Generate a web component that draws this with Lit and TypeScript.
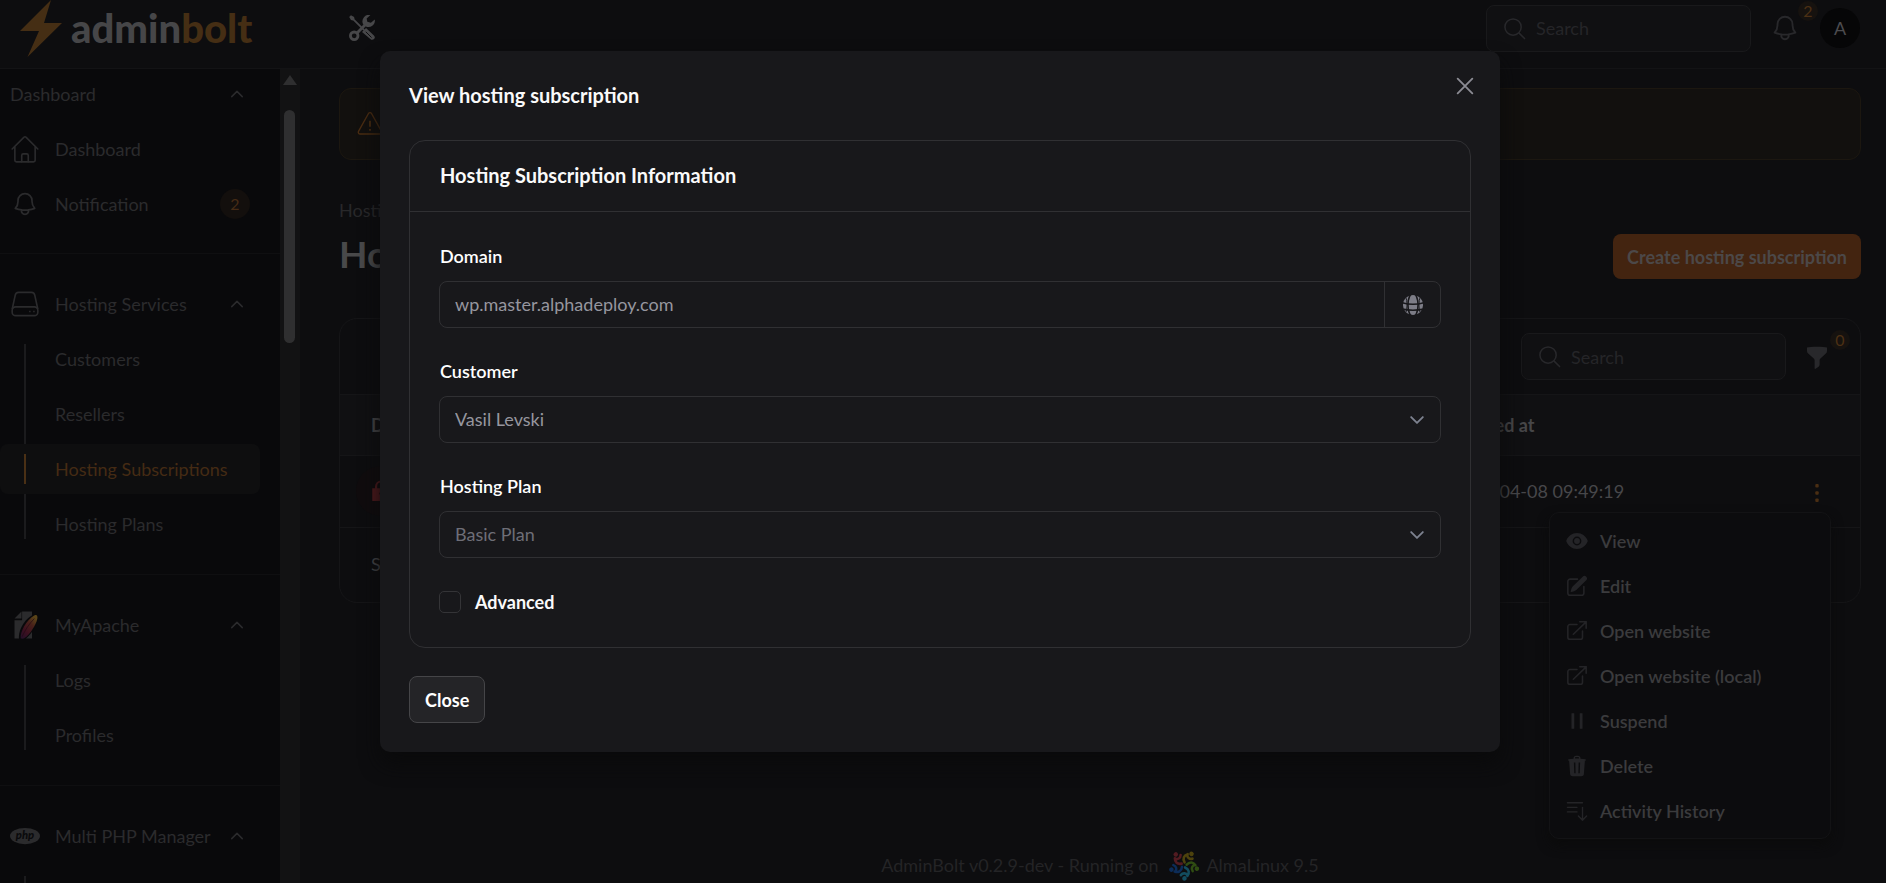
import { LitElement, html, css, svg, nothing } from "lit";
import { customElement, property } from "lit/decorators.js";
import { classMap } from "lit/directives/class-map.js";

const icons = {
  home: svg`<g fill="none" stroke="currentColor" stroke-width="1.4" stroke-linecap="round" stroke-linejoin="round"><path d="M1 12 11.2 1.8a1.1 1.1 0 0 1 1.6 0L23 12M3.3 10v11.6c0 .8.6 1.4 1.4 1.4h14.6c.8 0 1.4-.6 1.4-1.4V10"/><path d="M9.2 23v-5.4c0-.8.6-1.4 1.4-1.4h2.8c.8 0 1.4.6 1.4 1.4V23"/></g>`,
  bell: svg`<path fill="none" stroke="currentColor" stroke-width="1.5" stroke-linecap="round" stroke-linejoin="round" d="M14.857 17.082a23.848 23.848 0 0 0 5.454-1.31A8.967 8.967 0 0 1 18 9.75V9A6 6 0 0 0 6 9v.75a8.967 8.967 0 0 1-2.312 6.022c1.733.64 3.56 1.085 5.455 1.31m5.714 0a24.255 24.255 0 0 1-5.714 0m5.714 0a3 3 0 1 1-5.714 0"/>`,
  drive: svg`<g fill="none" stroke="currentColor" stroke-width="1.4" stroke-linejoin="round"><path d="M1 16.5 3.6 4.6A3 3 0 0 1 6.500 2h11a3 3 0 0 1 2.900 2.600L23 16.500"/><rect x="1" y="14.500" width="22" height="7.500" rx="3"/></g><path fill="currentColor" d="M15.500 17.700h1.300V19h-1.300zM19 17.700h1.300V19H19z"/>`,
  apache: svg`<defs><linearGradient id="feather" x1="0" y1="1" x2=".7" y2="0"><stop offset="0" stop-color="#22102a"/><stop offset=".35" stop-color="#3c1020"/><stop offset=".7" stop-color="#48201a"/><stop offset="1" stop-color="#5a4418"/></linearGradient></defs><path fill="#2b2b2d" d="M3 8h6.500V.500H18V23.500H3z"/><path fill="#2b2b2d" d="m3 6.500 6-6v6z"/><path d="M7 24.500C5.500 18 11 6 20.500 2.500 26 2.500 22 16 12 24.500z" fill="#09090b"/><path fill="url(#feather)" d="M8.300 23.400C7.500 18.500 13 7.500 20.300 3.600 22.400 3 23 4.500 22.500 6.800 21.300 12 16.300 19.800 12 23c-1.200.8-2.800 1-3.700.4z"/><path d="M9.500 22C12 16.500 15.500 11 20 6.500" fill="none" stroke="#220a12" stroke-width=".6"/>`,
  php: svg`<ellipse cx="12" cy="12" rx="12" ry="6.500" fill="#2b2b2d"/><text x="12" y="14.600" text-anchor="middle" font-family="Lato, sans-serif" font-style="italic" font-weight="900" font-size="9" fill="#09090b">php</text>`,
  up: svg`<path fill="none" stroke="currentColor" stroke-width="2" stroke-linecap="round" stroke-linejoin="round" d="m5 15.500 7-7 7 7"/>`,
  down: svg`<path fill="none" stroke="currentColor" stroke-width="2.200" stroke-linecap="round" stroke-linejoin="round" d="m5 8.500 7 7 7-7"/>`,
  search: svg`<g fill="none" stroke="currentColor" stroke-width="1.600" stroke-linecap="round"><circle cx="10.500" cy="10.500" r="8.500"/><path d="m16.800 16.800 5.700 5.700"/></g>`,
  close: svg`<path fill="none" stroke="currentColor" stroke-width="2" stroke-linecap="round" d="m4 4 16 16M20 4 4 20"/>`,
  warning: svg`<g fill="none" stroke="currentColor" stroke-width="1.300" stroke-linecap="round" stroke-linejoin="round"><path d="M10.600 2.300a1.600 1.600 0 0 1 2.800 0l9.200 16.500a1.600 1.600 0 0 1-1.400 2.400H2.800a1.600 1.600 0 0 1-1.400-2.400z"/><path stroke-linecap="butt" stroke-width="1.600" d="M12 9v5.500M12 16.500v1.700"/></g>`,
  tools: svg`<g><path fill="none" stroke="currentColor" stroke-width="1.700" d="M1.500 1.500 14 14"/><path fill="currentColor" d="m.2 1.800 1.600-1.600 2.900 1.600.4 1.900-1.400 1.400-1.900-.4z"/><path fill="currentColor" d="M12 15.700 15.700 12 23 19c1.200 1.200 1 2.400.1 3.200s-2.200 1.200-3.400 0z"/><path fill="none" stroke="#0d0d0f" stroke-width=".9" d="m15.500 15.500 5.300 5.300"/><path fill="none" stroke="currentColor" stroke-width="2.700" d="m7 17 8-8"/><circle cx="4.800" cy="19.200" r="3.500" fill="none" stroke="currentColor" stroke-width="2.600"/><path fill="currentColor" d="M19.800 0a6 6 0 0 0-6.900 8.200c2 2.900 5.800 3.800 8.600 1.800 1.900-1.400 2.700-3.700 2.300-5.800l-3.600 3-3.300-.9-.6-3z"/></g>`,
  globe: svg`<circle cx="12" cy="12" r="11" fill="currentColor"/><g fill="none" stroke="#18181b" stroke-width="1.700"><ellipse cx="12" cy="12" rx="5.500" ry="13"/><path d="M0 9.500c7 2 17 2 24 0M0 16.500c7 1.500 17 1.500 24 0"/><path d="M4 3c2 4 2 14 0 18M20 3c-2 4-2 14 0 18" stroke-width="1"/></g>`,
  funnel: svg`<path fill="currentColor" d="M2 2.600C5 1.400 19 1.400 22 2.600v3.300c0 1-.4 2-1.200 2.700l-5.600 5.200a2 2 0 0 0-.6 1.400v4.600c0 .8-.4 1.500-1 1.900l-3 2.100c-.6.300-1 .1-1-.6v-8c0-.5-.2-1-.6-1.400L3.200 8.600A3.700 3.700 0 0 1 2 5.900z"/>`,
  dots: svg`<g fill="currentColor"><rect x="10.300" y="3" width="3.400" height="3.400" rx="1"/><rect x="10.300" y="10.300" width="3.400" height="3.400" rx="1"/><rect x="10.300" y="17.600" width="3.400" height="3.400" rx="1"/></g>`,
  lock: svg`<path fill="currentColor" fill-rule="evenodd" d="M5.500 9V7a6.500 6.500 0 0 1 13 0v2h2.200v14H2.500V9zm2.300 0h8.400V7a4.200 4.200 0 0 0-8.400 0zM12 13a1.800 1.800 0 0 0-1 3.300V19h2v-2.700A1.800 1.800 0 0 0 12 13z"/>`,
  eye: svg`<path fill="currentColor" fill-rule="evenodd" d="M.4 12.600a1.600 1.600 0 0 1 0-1.200C2.300 6.600 6.700 3.300 12 3.300s9.700 3.300 11.600 8.100c.2.400.2.800 0 1.200-1.900 4.800-6.300 8.100-11.600 8.100S2.300 17.400.4 12.600zM12 16.800a4.800 4.800 0 1 0 0-9.600 4.800 4.800 0 0 0 0 9.600z"/><circle cx="12" cy="12" r="3.200" fill="currentColor"/>`,
  edit: svg`<path fill="currentColor" d="M18.200 1.900a2.700 2.700 0 0 1 3.900 3.800L11.500 16.200a6 6 0 0 1-2.600 1.500l-3 .9c-.6.100-.9-.2-.8-.8l.9-3c.3-1 .8-1.900 1.500-2.600z"/><path fill="none" stroke="currentColor" stroke-width="1.700" stroke-linecap="round" d="M12.500 4.500H4.600C3.200 4.500 2 5.600 2 7v12.500C2 20.900 3.200 22 4.600 22h12.300c1.400 0 2.600-1.100 2.600-2.500v-7"/>`,
  open: svg`<g fill="none" stroke="currentColor" stroke-width="1.700" stroke-linecap="round" stroke-linejoin="round"><path d="M12 5H4.300C3 5 2 6 2 7.300v11.400C2 20 3 21 4.300 21h11.400c1.300 0 2.300-1 2.300-2.300V12M8 15.500 22 2M15 2h7v7"/></g>`,
  pause: svg`<path fill="currentColor" d="M6 3.500h3v17H6zM15 3.500h3v17h-3z"/>`,
  trash: svg`<path fill="currentColor" fill-rule="evenodd" d="M8.200 4V3.300C8.200 1.800 9.400.7 10.900.7h2.200c1.500 0 2.700 1.100 2.700 2.600V4c2 .1 4 .3 5.700.7v1.700l-.9-.1-1.100 14.500c-.1 1.500-1.300 2.500-2.800 2.500H7.300c-1.500 0-2.700-1-2.800-2.500L3.400 6.300l-.9.100V4.700C4.200 4.300 6.200 4.100 8.200 4zm1.600-.1h4.400v-.6c0-.6-.5-1.100-1.100-1.100h-2.200c-.6 0-1.100.5-1.100 1.100zM8.600 8.300l.4 11.500h1.500l-.3-11.500zm5.200 0-.3 11.500H15l.4-11.500z"/>`,
  history: svg`<path fill="none" stroke="currentColor" stroke-width="1.500" stroke-linecap="round" stroke-linejoin="round" d="M1.500 3H18M1.500 8H12M1.500 13H12M18 8v13.500M13.500 17.500 18 22l4.500-4.500"/>`,
};
type IconName = keyof typeof icons;

@customElement("ab-icon")
export class AbIcon extends LitElement {
  @property() name: IconName = "home";
  static styles = css`
    :host { display: inline-flex; flex: none; width: 24px; height: 24px; }
    svg { width: 100%; height: 100%; display: block; }
  `;
  render() {
    return html`<svg viewBox="0 0 24 24" aria-hidden="true">${icons[this.name]}</svg>`;
  }
}

interface NavItem { label: string; icon?: IconName; badge?: string; active?: boolean }
interface NavGroup { label: string; icon?: IconName; items: NavItem[] }

const groups: NavGroup[] = [
  { label: "Dashboard", items: [{ label: "Dashboard", icon: "home" }, { label: "Notification", icon: "bell", badge: "2" }] },
  { label: "Hosting Services", icon: "drive", items: [{ label: "Customers" }, { label: "Resellers" }, { label: "Hosting Subscriptions", active: true }, { label: "Hosting Plans" }] },
  { label: "MyApache", icon: "apache", items: [{ label: "Logs" }, { label: "Profiles" }] },
  { label: "Multi PHP Manager", icon: "php", items: [{ label: "" }] },
];

const rowActions: { label: string; icon: IconName }[] = [
  { label: "View", icon: "eye" },
  { label: "Edit", icon: "edit" },
  { label: "Open website", icon: "open" },
  { label: "Open website (local)", icon: "open" },
  { label: "Suspend", icon: "pause" },
  { label: "Delete", icon: "trash" },
  { label: "Activity History", icon: "history" },
];

const almaArms = ["#4d420d", "#2f4c12", "#134c5e", "#0c2c58", "#521b21"];

@customElement("app-root")
export class AppRoot extends LitElement {
  static styles = css`
    * { box-sizing: border-box; }
    :host {
      display: block; position: relative; height: 100vh; overflow: hidden;
      background: #0d0d0f; color: #47474a;
      font: 400 18px/28px Lato, "Open Sans", sans-serif;
    }
    button, input, select { font: inherit; color: inherit; }
    button { border: 0; background: none; padding: 0; margin: 0; }
    a { color: inherit; text-decoration: none; }
    h1, h2, h3, p, ul { margin: 0; padding: 0; }

    .page { display: flex; flex-direction: column; height: 100%; }
    .topbar {
      flex: none; display: flex; align-items: center; height: 69px;
      padding: 0 26px 12px 20px; border-bottom: 1px solid #131315;
    }
    .brand { display: flex; align-items: center; gap: 9px; width: 329px; }
    .bolt { width: 42px; height: 57px; }
    .brand-name { font-size: 40px; line-height: 48px; font-weight: 900; color: #464648; }
    .brand-name b { font-weight: 900; color: #452e14; }
    .tools { width: 26px; height: 26px; color: #474749; }
    .top-right { margin-left: auto; display: flex; align-items: center; }
    .search {
      display: flex; align-items: center; gap: 10px; width: 265px; height: 47px; padding: 0 16px;
      border: 1px solid #19191b; border-radius: 8px; background: #101012; color: #28282b;
    }
    .search input { width: 100%; min-width: 0; border: 0; outline: 0; padding: 0; background: none; }
    .search input::placeholder { color: #252528; opacity: 1; }
    .search ab-icon { width: 23px; height: 23px; }
    .icon-btn { position: relative; display: inline-flex; color: #28282b; }
    .top-right .icon-btn { margin: 0 20px 0 19px; }
    .top-right .icon-btn ab-icon { width: 30px; height: 30px; }
    .count {
      position: absolute; left: 100%; bottom: 100%; width: 20px; height: 20px; margin: 0 0 -8px -2px;
      border-radius: 10px; background: #16120f; color: #4c3014; font-size: 16px; line-height: 20px; text-align: center;
    }
    .avatar {
      width: 40px; height: 40px; border-radius: 50%; background: #060607; color: #4c4c4f;
      display: flex; align-items: center; justify-content: center;
    }

    .body { flex: 1; min-height: 0; display: flex; }
    .sidebar { width: 280px; flex: none; overflow: hidden; background: #09090b; color: #2b2b2d; }
    .group { padding: 24px 20px 25px 0; border-top: 1px solid #0f0f11; display: flex; flex-direction: column; gap: 5px; }
    .group + .group { padding-top: 25px; }
    .group:first-child { padding-top: 0; padding-bottom: 24px; border-top: 0; }
    .nav-row { display: flex; align-items: center; width: 100%; height: 50px; padding: 0 10px; border-radius: 8px; text-align: left; }
    .nav-row .lead { width: 30px; margin-right: 15px; display: flex; justify-content: center; }
    .nav-row .lead ab-icon { width: 28px; height: 28px; }
    .nav-row .lead .big { width: 30px; height: 30px; }
    .nav-row .chev { width: 18px; height: 18px; margin: 0 4px 0 auto; }
    .badge { margin-left: auto; width: 30px; height: 30px; border-radius: 15px; background: #130f0d; color: #462b15; font-size: 16px; line-height: 30px; text-align: center; }
    .items { display: flex; flex-direction: column; gap: 5px; }
    .nested { background: linear-gradient(#1b1b1d, #1b1b1d) 24px 10px / 2px calc(100% - 20px) no-repeat; }
    .nested .nav-row { padding-left: 55px; }
    .nested .active { background: linear-gradient(#4a3015, #4a3015) 24px 10px / 2px 30px no-repeat, #0e0e0f; color: #452b14; }

    .track { width: 20px; flex: none; background: #121213; display: flex; flex-direction: column; align-items: center; gap: 25px; padding: 6px 1px 0 0; }
    .arrow { border: 7px solid transparent; border-top-width: 0; border-bottom: 10px solid #2f2f30; }
    .thumb { width: 11px; height: 233px; border-radius: 6px; background: #2f2f30; }

    main { flex: 1; min-width: 0; padding: 19px 25px 3px 39px; display: flex; flex-direction: column; }
    .alert {
      height: 72px; padding: 0 17px; display: flex; align-items: center; gap: 12px; color: #492c12;
      border: 1px solid #1c1710; border-radius: 12px; background: #12100e;
    }
    .alert ab-icon { width: 26px; height: 26px; }
    .crumbs { margin-top: 36px; color: #28282a; }
    .heading { margin-top: 10px; display: flex; align-items: center; justify-content: space-between; }
    h1 { font-size: 37px; line-height: 40px; padding-bottom: 5px; font-weight: 700; color: #49494a; }
    .create { height: 45px; padding: 0 14px; border-radius: 8px; background: #432410; color: #4c4848; font-weight: 700; white-space: nowrap; }

    .card { margin-top: 39px; border: 1px solid #151517; border-radius: 18px; }
    .tablebar { display: flex; justify-content: flex-end; align-items: center; padding: 14px 31px 14px 0; }
    .tablebar .icon-btn { margin-left: 19px; }
    .tablebar .count { margin: 0 0 -5px 1px; }
    table { width: 100%; border-collapse: collapse; table-layout: fixed; }
    .w-date { width: 354px; }
    .w-act { width: 86px; }
    th, td { border-top: 1px solid #151517; padding: 0 31px; text-align: left; }
    th { height: 61px; background: #101012; font-weight: 700; color: #464648; }
    td { height: 71px; }
    .cell-act { position: relative; text-align: center; padding: 0; }
    .cell-act .dots { display: inline-flex; color: #4a2e13; vertical-align: middle; }
    .lock { display: flex; align-items: center; justify-content: center; width: 50px; height: 50px; margin-left: -15px; border-radius: 25px; background: #100c0e; color: #501a1d; }
    .lock ab-icon { width: 22px; height: 22px; }
    .summary { height: 75px; border-top: 1px solid #151517; padding: 22px 31px; }

    .menu {
      position: absolute; top: 56px; right: 29px; width: 282px; padding: 5px; text-align: left;
      border: 1px solid #131315; border-radius: 10px; background: #0c0c0e;
      box-shadow: 0 6px 12px #0b0b0b;
    }
    .menu button { display: flex; align-items: center; gap: 12px; width: 100%; height: 45px; padding: 0 11px; font-weight: 600; color: #3b3b3d; }
    .menu ab-icon { width: 22px; height: 22px; color: #242427; }

    footer { margin-top: auto; display: flex; justify-content: center; align-items: center; gap: 6px; height: 30px; color: #242426; }
    footer svg { width: 32px; height: 32px; margin-left: 4px; }

    .overlay { position: absolute; inset: 0; z-index: 5; padding: 51px 6px 0 0; display: flex; justify-content: center; align-items: flex-start; }
    .dialog {
      position: relative; width: 100%; max-width: 1120px; padding: 29px; border-radius: 10px; background: #18181b;
      color: #fafafa; box-shadow: 0 12px 20px #0a0a0b;
    }
    .dialog h2, .dialog h3 { font-size: 20px; line-height: 30px; font-weight: 700; }
    .x { position: absolute; top: 24px; right: 24px; width: 22px; height: 22px; color: #8b8b93; }
    .x ab-icon { width: 22px; height: 22px; }
    .section { margin-top: 30px; border: 1px solid #303033; border-radius: 16px; }
    .section h3 { padding: 19px 30px 21px; border-bottom: 1px solid #303033; }
    .fields { padding: 30px 29px 31px; display: flex; flex-direction: column; gap: 29px; }
    .field { display: flex; flex-direction: column; gap: 11px; }
    .field label { font-weight: 600; color: #fff; padding-left: 1px; }
    .control { display: flex; align-items: center; height: 47px; border: 1px solid #303033; border-radius: 8px; color: #96969f; }
    .control input, .control select {
      flex: 1; min-width: 0; height: 100%; padding: 0 15px 2px; border: 0; outline: 0; background: none;
      appearance: none; opacity: 1; color: inherit;
    }
    .muted { color: #6e6e77; }
    .suffix { width: 56px; height: 100%; display: flex; align-items: center; justify-content: center; border-left: 1px solid #303033; color: #7d7d87; }
    .suffix ab-icon { width: 22px; height: 22px; }
    .control .caret { width: 20px; height: 20px; margin-right: 13px; color: #7d8290; }
    .check { display: flex; align-items: center; gap: 14px; height: 28px; margin-top: 1px; font-weight: 700; }
    .check input { appearance: none; width: 22px; height: 22px; margin: 0; border: 1px solid #343437; border-radius: 5px; }
    .close { margin-top: 28px; height: 47px; padding: 0 15px; border: 1px solid #454548; border-radius: 8px; background: #242427; color: #fff; font-weight: 700; display: block; }
  `;

  private navGroup(g: NavGroup) {
    return html`<section class="group">
      <button class="nav-row">
        ${g.icon ? html`<span class="lead"><ab-icon class=${g.icon === "php" ? "big" : ""} name=${g.icon}></ab-icon></span>` : nothing}
        <span>${g.label}</span><ab-icon class="chev" name="up"></ab-icon>
      </button>
      <div class=${classMap({ items: true, nested: !!g.icon })}>
        ${g.items.map((i) => html`<a href="#" class=${classMap({ "nav-row": true, active: !!i.active })}>
          ${i.icon ? html`<span class="lead"><ab-icon name=${i.icon}></ab-icon></span>` : nothing}
          <span>${i.label}</span>${i.badge ? html`<span class="badge">${i.badge}</span>` : nothing}
        </a>`)}
      </div>
    </section>`;
  }

  private searchBox(label: string) {
    return html`<label class="search"><ab-icon name="search"></ab-icon><input type="search" placeholder="Search" aria-label=${label} /></label>`;
  }

  render() {
    return html`
      <div class="page">
        <header class="topbar">
          <a class="brand" href="#">
            <svg class="bolt" viewBox="0 0 42 57" aria-hidden="true"><path fill="#452e14" d="M31 0 0 31h19L7.500 57 42 23H24z"/></svg>
            <span class="brand-name">admin<b>bolt</b></span>
          </a>
          <ab-icon class="tools" name="tools"></ab-icon>
          <div class="top-right">
            ${this.searchBox("Global search")}
            <button class="icon-btn" aria-label="Notifications"><ab-icon name="bell"></ab-icon><span class="count">2</span></button>
            <button class="avatar" aria-label="Account">A</button>
          </div>
        </header>
        <div class="body">
          <nav class="sidebar">${groups.map((g) => this.navGroup(g))}</nav>
          <div class="track"><span class="arrow"></span><span class="thumb"></span></div>
          <main>
            <div class="alert"><ab-icon name="warning"></ab-icon></div>
            <div class="crumbs"><a href="#">Hosting Subscriptions</a></div>
            <div class="heading">
              <h1>Hosting Subscriptions</h1>
              <button class="create">Create hosting subscription</button>
            </div>
            <div class="card">
              <div class="tablebar">
                ${this.searchBox("Search subscriptions")}
                <button class="icon-btn" aria-label="Filter"><ab-icon name="funnel"></ab-icon><span class="count">0</span></button>
              </div>
              <table>
                <colgroup><col /><col class="w-date" /><col class="w-act" /></colgroup>
                <thead><tr><th>Domain</th><th>Created at</th><th></th></tr></thead>
                <tbody><tr>
                  <td><span class="lock"><ab-icon name="lock"></ab-icon></span></td>
                  <td>2025-04-08 09:49:19</td>
                  <td class="cell-act">
                    <button class="dots" aria-label="Actions"><ab-icon name="dots"></ab-icon></button>
                    <div class="menu">${rowActions.map((a) => html`<button><ab-icon name=${a.icon}></ab-icon>${a.label}</button>`)}</div>
                  </td>
                </tr></tbody>
              </table>
              <p class="summary">Showing 1 result</p>
            </div>
            <footer>
              <span>AdminBolt v0.2.9-dev - Running on</span>
              <svg viewBox="0 0 32 32" aria-hidden="true">
                ${almaArms.map((c, i) => svg`<g transform="rotate(${34 + i * 72} 16 16)" stroke=${c} fill="none"><path stroke-width="2.600" stroke-linecap="round" d="M15 13.500c-4-2-4.500-5.500-2-8.500M13 5.500c1 2.500 4.500 3 6.500.5"/><circle cx="16" cy="2.600" r="2.300" fill=${c} stroke="none"/></g>`)}
              </svg>
              <span>AlmaLinux 9.5</span>
            </footer>
          </main>
        </div>
      </div>
      <div class="overlay">
        <div class="dialog" role="dialog" aria-modal="true" aria-labelledby="title">
          <button class="x" aria-label="Close dialog"><ab-icon name="close"></ab-icon></button>
          <h2 id="title">View hosting subscription</h2>
          <section class="section">
            <h3>Hosting Subscription Information</h3>
            <div class="fields">
              <div class="field">
                <label for="domain">Domain</label>
                <div class="control"><input id="domain" type="text" value="wp.master.alphadeploy.com" disabled /><span class="suffix"><ab-icon name="globe"></ab-icon></span></div>
              </div>
              <div class="field">
                <label for="customer">Customer</label>
                <div class="control"><select id="customer" disabled><option>Vasil Levski</option></select><ab-icon class="caret" name="down"></ab-icon></div>
              </div>
              <div class="field">
                <label for="plan">Hosting Plan</label>
                <div class="control muted"><select id="plan" disabled><option>Basic Plan</option></select><ab-icon class="caret" name="down"></ab-icon></div>
              </div>
              <label class="check"><input type="checkbox" disabled />Advanced</label>
            </div>
          </section>
          <button class="close">Close</button>
        </div>
      </div>
    `;
  }
}
